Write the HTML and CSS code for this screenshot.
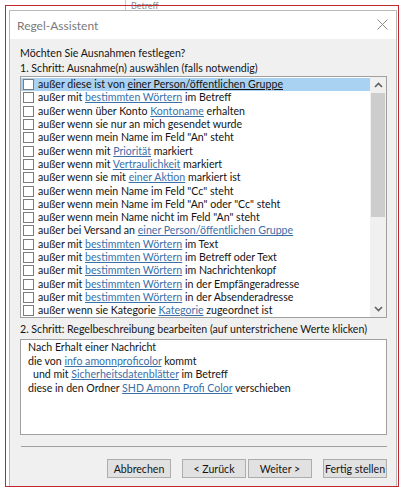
FILE: index.html
```html
<!DOCTYPE html>
<html lang="de">
<head>
<meta charset="utf-8">
<title>Regel-Assistent</title>
<link rel="stylesheet" href="styles.css">
</head>
<body>
<div class="backdrop">
  <div class="bg-fragment"><span class="bg-line"></span><span class="bg-text">Betreff</span></div>
  <div class="frame">
    <div class="dialog">
      <div class="titlebar">
        <span class="title">Regel-Assistent</span>
        <svg class="close" width="11" height="11" viewBox="0 0 11 11"><path d="M0.5 0.5 L10.5 10.5 M10.5 0.5 L0.5 10.5" stroke="#8a8a8a" stroke-width="1" fill="none"/></svg>
      </div>
      <div class="body">
        <div class="label">Möchten Sie Ausnahmen festlegen?</div>
        <div class="label">1. Schritt: Ausnahme(n) auswählen (falls notwendig)</div>
        <div class="listbox">
          <div class="rows">
            <div class="row selected"><span class="cb"></span><span>außer diese ist von <u>einer Person/öffentlichen Gruppe</u></span></div>
            <div class="row"><span class="cb"></span><span>außer mit <a>bestimmten Wörtern</a> im Betreff</span></div>
            <div class="row"><span class="cb"></span><span>außer wenn über Konto <a>Kontoname</a> erhalten</span></div>
            <div class="row"><span class="cb"></span><span>außer wenn sie nur an mich gesendet wurde</span></div>
            <div class="row"><span class="cb"></span><span>außer wenn mein Name im Feld "An" steht</span></div>
            <div class="row"><span class="cb"></span><span>außer wenn mit <a>Priorität</a> markiert</span></div>
            <div class="row"><span class="cb"></span><span>außer wenn mit <a>Vertraulichkeit</a> markiert</span></div>
            <div class="row"><span class="cb"></span><span>außer wenn sie mit <a>einer Aktion</a> markiert ist</span></div>
            <div class="row"><span class="cb"></span><span>außer wenn mein Name im Feld "Cc" steht</span></div>
            <div class="row"><span class="cb"></span><span>außer wenn mein Name im Feld "An" oder "Cc" steht</span></div>
            <div class="row"><span class="cb"></span><span>außer wenn mein Name nicht im Feld "An" steht</span></div>
            <div class="row"><span class="cb"></span><span>außer bei Versand an <a>einer Person/öffentlichen Gruppe</a></span></div>
            <div class="row"><span class="cb"></span><span>außer mit <a>bestimmten Wörtern</a> im Text</span></div>
            <div class="row"><span class="cb"></span><span>außer mit <a>bestimmten Wörtern</a> im Betreff oder Text</span></div>
            <div class="row"><span class="cb"></span><span>außer mit <a>bestimmten Wörtern</a> im Nachrichtenkopf</span></div>
            <div class="row"><span class="cb"></span><span>außer mit <a>bestimmten Wörtern</a> in der Empfängeradresse</span></div>
            <div class="row"><span class="cb"></span><span>außer mit <a>bestimmten Wörtern</a> in der Absenderadresse</span></div>
            <div class="row"><span class="cb"></span><span>außer wenn sie Kategorie <a>Kategorie</a> zugeordnet ist</span></div>
          </div>
          <div class="scrollbar">
            <div class="arrow"><svg width="9" height="6" viewBox="0 0 9 6"><path d="M1 5 L4.5 1.5 L8 5" stroke="#606060" stroke-width="1.6" fill="none"/></svg></div>
            <div class="track"><div class="thumb"></div></div>
            <div class="arrow"><svg width="9" height="6" viewBox="0 0 9 6"><path d="M1 1 L4.5 4.5 L8 1" stroke="#606060" stroke-width="1.6" fill="none"/></svg></div>
          </div>
        </div>
        <div class="label step2">2. Schritt: Regelbeschreibung bearbeiten (auf unterstrichene Werte klicken)</div>
        <div class="desc">
          <div>Nach Erhalt einer Nachricht</div>
          <div>die von <a>info amonnproficolor</a> kommt</div>
          <div class="indent">und mit <a>Sicherheitsdatenblätter</a> im Betreff</div>
          <div>diese in den Ordner <a>SHD Amonn Profi Color</a> verschieben</div>
        </div>
        <div class="separator"></div>
        <div class="buttons">
          <button class="btn">Abbrechen</button>
          <div class="pair">
            <button class="btn">&lt; Zurück</button>
            <button class="btn">Weiter &gt;</button>
          </div>
          <button class="btn">Fertig stellen</button>
        </div>
      </div>
    </div>
  </div>
</div>
</body>
</html>
```

FILE: styles.css
```css
* { box-sizing: border-box; }
html, body { margin: 0; padding: 0; }
body {
  width: 404px;
  height: 493px;
  overflow: hidden;
  background: #ffffff;
  font-family: Lato, "Noto Sans", "DejaVu Sans", sans-serif;
  font-size: 10.6px;
  color: #141414;
}
.backdrop {
  position: relative;
  width: 404px;
  height: 493px;
  padding: 5px 0 0 5px;
}
.bg-fragment {
  position: absolute;
  left: 125px;
  top: 0;
  height: 10px;
  display: flex;
  align-items: flex-start;
  gap: 5px;
}
.bg-line { width: 1px; height: 10px; background: #c8c8c8; }
.bg-text { font-size: 9px; line-height: 9px; color: #8a8a8a; margin-top: 1px; }
.frame {
  position: relative;
  width: 394px;
  height: 482px;
  border: 1px solid #c0282f;
  padding: 4px 0 0 3px;
  overflow: hidden;
}
.dialog {
  width: 388px;
  height: 480px;
  border: 1px solid #b9b9b9;
  background: #f0f0f0;
}
.titlebar {
  height: 28px;
  background: #ffffff;
  display: flex;
  align-items: center;
  justify-content: space-between;
  padding: 0 8px 0 7px;
}
.title { color: #7a7a7a; font-size: 12px; }
.close { margin-top: -1px; }
.body {
  padding: 7px 9px 0 10px;
}
.label { line-height: 15px; white-space: nowrap; }
.listbox {
  height: 242px;
  border: 1px solid #a0a0a0;
  background: #ffffff;
  display: flex;
}
.rows { flex: 1; padding-top: 1px; overflow: hidden; }
.row {
  height: 13.3px;
  display: flex;
  align-items: center;
  gap: 4px;
  padding-left: 2px;
  white-space: nowrap;
  line-height: 13px;
}
.row.selected { background: #a8d1f2; }
.cb {
  flex: none;
  width: 11px;
  height: 11px;
  border: 1px solid #7c7c7c;
  background: #ffffff;
}
a, u { color: #3b6fa8; text-decoration: underline; }
.row.selected u { color: #141414; }
.scrollbar {
  width: 16px;
  background: #f0f0f0;
  display: flex;
  flex-direction: column;
}
.arrow { height: 16px; display: flex; align-items: center; justify-content: center; }
.track { flex: 1; }
.thumb { height: 124px; background: #cdcdcd; margin: 0 1px; }
.step2 { margin-top: 4px; line-height: 15px; }
.desc {
  height: 96px;
  border: 1px solid #a0a0a0;
  background: #ffffff;
  padding: 1px 7px;
  line-height: 13.5px;
  margin-top: 2px;
}
.desc .indent { padding-left: 5px; }
.separator {
  height: 1px;
  background: #a0a0a0;
  margin: 11px 0 0 1px;
}
.buttons {
  display: flex;
  justify-content: flex-end;
  margin-top: 12px;
  gap: 11px;
}
.pair { display: flex; gap: 2px; }
.btn {
  width: 64px;
  height: 19px;
  border: 1px solid #adadad;
  background: #e1e1e1;
  font-family: inherit;
  font-size: 10.6px;
  color: #141414;
  padding: 0;
  white-space: nowrap;
}
```
